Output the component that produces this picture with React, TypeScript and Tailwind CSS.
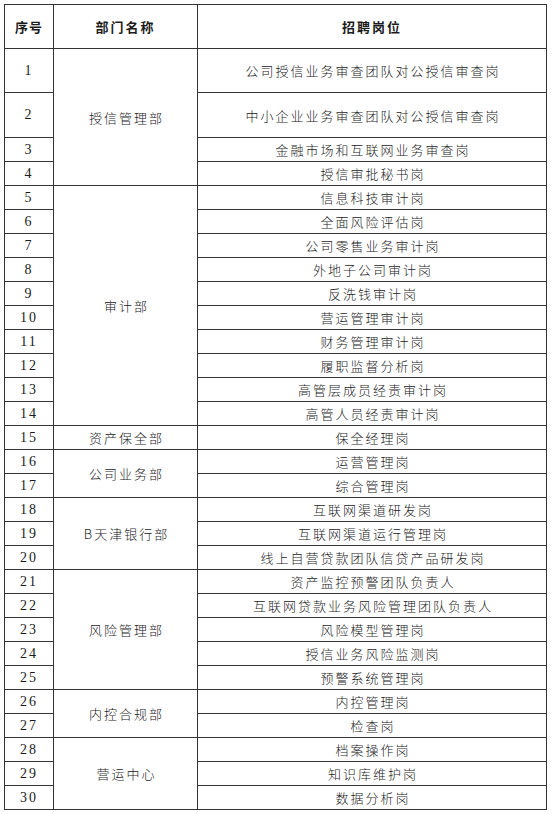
const groups: { dept: string; jobs: string[] }[] = [
  {
    dept: "授信管理部",
    jobs: [
      "公司授信业务审查团队对公授信审查岗",
      "中小企业业务审查团队对公授信审查岗",
      "金融市场和互联网业务审查岗",
      "授信审批秘书岗",
    ],
  },
  {
    dept: "审计部",
    jobs: [
      "信息科技审计岗",
      "全面风险评估岗",
      "公司零售业务审计岗",
      "外地子公司审计岗",
      "反洗钱审计岗",
      "营运管理审计岗",
      "财务管理审计岗",
      "履职监督分析岗",
      "高管层成员经责审计岗",
      "高管人员经责审计岗",
    ],
  },
  { dept: "资产保全部", jobs: ["保全经理岗"] },
  { dept: "公司业务部", jobs: ["运营管理岗", "综合管理岗"] },
  {
    dept: "B天津银行部",
    jobs: ["互联网渠道研发岗", "互联网渠道运行管理岗", "线上自营贷款团队信贷产品研发岗"],
  },
  {
    dept: "风险管理部",
    jobs: [
      "资产监控预警团队负责人",
      "互联网贷款业务风险管理团队负责人",
      "风险模型管理岗",
      "授信业务风险监测岗",
      "预警系统管理岗",
    ],
  },
  { dept: "内控合规部", jobs: ["内控管理岗", "检查岗"] },
  { dept: "营运中心", jobs: ["档案操作岗", "知识库维护岗", "数据分析岗"] },
];

const cjk = "font-['Noto_Sans_CJK_SC',sans-serif]";

export default function App() {
  let n = 0;
  return (
    <div className="min-h-screen bg-white pl-[4px] pt-[4px]">
      <table className={`border-collapse text-[#1c1c1c] ${cjk}`}>
        <colgroup>
          <col className="w-[49px]" />
          <col className="w-[144px]" />
          <col className="w-[349px]" />
        </colgroup>
        <thead>
          <tr className="h-[44px]">
            <th className="border border-[#333] text-[13px] font-bold tracking-[1px] text-center">序号</th>
            <th className="border border-[#333] text-[13px] font-bold tracking-[2px] text-center">部门名称</th>
            <th className="border border-[#333] text-[13px] font-bold tracking-[2px] text-center">招聘岗位</th>
          </tr>
        </thead>
        <tbody>
          {groups.map((g) =>
            g.jobs.map((job, i) => {
              n += 1;
              const h = n === 1 ? "h-[44px]" : n === 2 ? "h-[45px]" : "h-[24px]";
              return (
                <tr key={n} className={h}>
                  <td className="border border-[#333] p-0 text-center font-['Liberation_Serif',serif] text-[14px] tracking-[2px] leading-none">
                    {n}
                  </td>
                  {i === 0 && (
                    <td
                      rowSpan={g.jobs.length}
                      className="border border-[#333] p-0 pl-[2px] text-center text-[13px] font-light tracking-[2px] leading-none"
                    >
                      {g.dept}
                    </td>
                  )}
                  <td className="border border-[#333] p-0 pl-[2px] text-center text-[13px] font-light tracking-[2px] leading-none">
                    {job}
                  </td>
                </tr>
              );
            })
          )}
        </tbody>
      </table>
    </div>
  );
}
